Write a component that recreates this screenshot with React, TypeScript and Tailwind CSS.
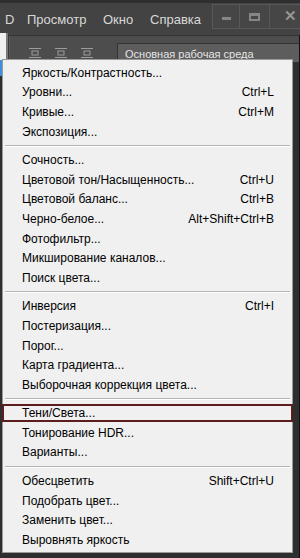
type Item = { label: string; shortcut?: string; active?: boolean };

const sections: Item[][] = [
  [
    { label: "Яркость/Контрастность..." },
    { label: "Уровни...", shortcut: "Ctrl+L" },
    { label: "Кривые...", shortcut: "Ctrl+M" },
    { label: "Экспозиция..." },
  ],
  [
    { label: "Сочность..." },
    { label: "Цветовой тон/Насыщенность...", shortcut: "Ctrl+U" },
    { label: "Цветовой баланс...", shortcut: "Ctrl+B" },
    { label: "Черно-белое...", shortcut: "Alt+Shift+Ctrl+B" },
    { label: "Фотофильтр..." },
    { label: "Микширование каналов..." },
    { label: "Поиск цвета..." },
  ],
  [
    { label: "Инверсия", shortcut: "Ctrl+I" },
    { label: "Постеризация..." },
    { label: "Порог..." },
    { label: "Карта градиента..." },
    { label: "Выборочная коррекция цвета..." },
  ],
  [
    { label: "Тени/Света...", active: true },
    { label: "Тонирование HDR..." },
    { label: "Варианты..." },
  ],
  [
    { label: "Обесцветить", shortcut: "Shift+Ctrl+U" },
    { label: "Подобрать цвет..." },
    { label: "Заменить цвет..." },
    { label: "Выровнять яркость" },
  ],
];

function AlignIcon() {
  return (
    <svg width="14" height="12" viewBox="0 0 14 12" className="text-[#9c9c9c]">
      <rect x="1" y="1" width="12" height="1" fill="currentColor" />
      <rect x="4" y="4" width="6" height="4" fill="none" stroke="currentColor" />
      <rect x="1" y="10" width="12" height="1" fill="currentColor" />
    </svg>
  );
}

function MenuRow({ item }: { item: Item }) {
  return (
    <div
      className={
        item.active
          ? "h-[18px] my-[0.8px] -mx-[1px] flex items-center justify-between pl-[18px] pr-[17px] border-2 border-[#5c1d1f]"
          : "h-[19.6px] flex items-center justify-between pl-[19px] pr-[18px]"
      }
    >
      <span>{item.label}</span>
      {item.shortcut && <span>{item.shortcut}</span>}
    </div>
  );
}

export default function App() {
  return (
    <div
      className="relative w-[300px] h-[558px] overflow-hidden bg-[#2e2e2e]"
      style={{ fontFamily: '"Liberation Sans", Arial, sans-serif' }}
    >
      {/* Menu bar */}
      <div className="h-[35px] bg-[#434343] border-t-[3px] border-[#2f2f2f] flex items-center pt-[2px] text-[13px] text-[#d8d8d8]">
        <span className="pl-[5px] w-[27px]">D</span>
        <span className="w-[76px]">Просмотр</span>
        <span className="w-[47px]">Окно</span>
        <span>Справка</span>
        <div className="ml-auto self-start -mt-[1px] h-[25px] w-[88px] flex border border-[#585858] border-r-0 bg-[#464646]">
          <div className="w-[27px] flex items-center justify-center border-r border-[#585858]">
            <div className="w-[9px] h-[3px] bg-[#858585] mt-[4px]" />
          </div>
          <div className="w-[30px] flex items-center justify-center border-r border-[#585858]">
            <div className="w-[11px] h-[8px] border-2 border-[#858585] border-t-[3px]" />
          </div>
          <div className="flex-1 flex items-center justify-end pr-[3px] text-[#959595] text-[15px] font-bold">
            ✕
          </div>
        </div>
      </div>

      {/* Options bar */}
      <div className="h-[25px] bg-[#4d4d4d] border-t border-[#353535] flex items-start">
        <div className="w-[8px] h-full" />
        <div className="w-[2px] h-full bg-[#3a3a3a] border-r border-[#5a5a5a]" />
        <div className="flex gap-[12px] ml-[18px] mt-[11px]">
          <AlignIcon />
          <AlignIcon />
          <AlignIcon />
        </div>
        <div className="ml-[23px] mt-[7px] flex-1 h-[20px] bg-[#5d5d5d] border border-[#333] border-r-0 pl-[7px] pt-[5px] text-[11px] leading-none text-[#e6e6e6]">
          Основная рабочая среда
        </div>
      </div>

      {/* Parent menu edge */}
      <div className="absolute left-0 top-[33px] w-[8px] h-[28px] bg-[#f0f0f0] border-r-2 border-[#7a7a7a]" />
      <div className="absolute left-0 top-[60px] w-[3px] h-[16px] bg-[#3d8ee0]" />

      {/* Adjustments submenu */}
      <div className="absolute left-[2px] top-[59px] w-[291px] bg-[#f0f0f0] border border-[#9a9a9a] pt-[3px] pb-[2px] text-[12px] text-black">
        {sections.map((section, i) => (
          <div key={i}>
            {i > 0 && (
              <div className="h-[9px] flex items-center px-[2px]">
                <div className="w-full border-t border-[#b4b4b4] border-b border-b-white" />
              </div>
            )}
            {section.map((item) => (
              <MenuRow key={item.label} item={item} />
            ))}
          </div>
        ))}
      </div>
      <div className="absolute right-0 top-[35px] w-[1px] h-[523px] bg-[#111]" />
    </div>
  );
}
